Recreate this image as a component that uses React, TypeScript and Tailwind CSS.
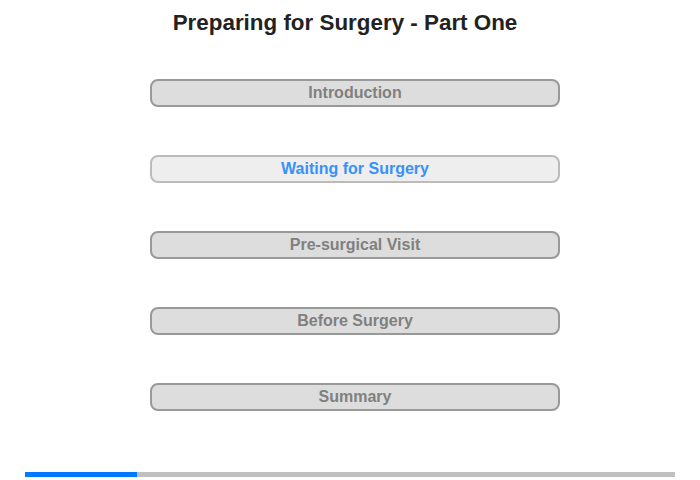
export default function App() {
  const items = [
    { label: "Introduction", active: false },
    { label: "Waiting for Surgery", active: true },
    { label: "Pre-surgical Visit", active: false },
    { label: "Before Surgery", active: false },
    { label: "Summary", active: false },
  ];
  return (
    <div className="w-[700px] h-[480px] bg-white flex flex-col" style={{ fontFamily: '"Liberation Sans", Arial, sans-serif' }}>
      <div className="h-[47px] pt-[10px] w-[690px] text-center text-[22.4px] leading-[26px] font-bold text-[#222222]">
        Preparing for Surgery - Part One
      </div>
      <div className="flex flex-col gap-[48px] mt-[32px] ml-[150px] w-[410px]">
        {items.map((it) => (
          <div
            key={it.label}
            className={
              it.active
                ? "h-[28px] rounded-[8px] border-2 border-[#bbbbbb] bg-[#eeeeee] flex items-center justify-center text-[16px] font-bold text-[#3891f8]"
                : "h-[28px] rounded-[8px] border-2 border-[#999999] bg-[#dddddd] flex items-center justify-center text-[16px] font-bold text-[#808080]"
            }
          >
            {it.label}
          </div>
        ))}
      </div>
      <div className="mt-[61px] ml-[25px] w-[650px] h-[5px] bg-[#c0c0c0] flex">
        <div className="w-[112px] h-full bg-[#007bff]" />
      </div>
    </div>
  );
}
